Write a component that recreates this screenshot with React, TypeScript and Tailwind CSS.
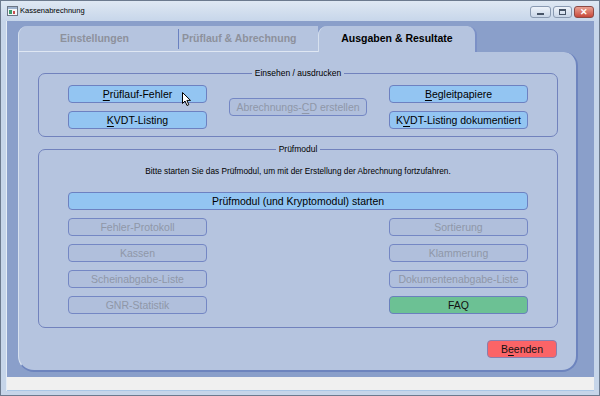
import React from 'react';

const font = { fontFamily: '"Liberation Sans", Arial, sans-serif' };

interface BtnProps {
  label: React.ReactNode;
  kind?: 'on' | 'off' | 'faq' | 'quit';
  className?: string;
  children?: React.ReactNode;
}

const Btn: React.FC<BtnProps> = ({ label, kind = 'on', className = '', children }) => {
  const look =
    kind === 'on'
      ? 'bg-[#93c5f2] border-[#6d81c1] text-black'
      : kind === 'off'
        ? 'bg-[#b0bfdc] border-[#7487c4] text-[#8f97a8]'
        : kind === 'faq'
          ? 'bg-[#6cc194] border-[#6a80bd] text-[#111]'
          : 'bg-[#fb6467] border-[#8a7fae] text-[#111]';
  return (
    <div
      className={`relative h-[18px] rounded-[4px] border flex items-center justify-center text-[10.5px] leading-none ${look} ${className}`}
    >
      <span>{label}</span>
      {children}
    </div>
  );
};

const U: React.FC<{ children: React.ReactNode }> = ({ children }) => (
  <span className="underline underline-offset-[2px]">{children}</span>
);

const Cursor = () => (
  <svg className="absolute left-[113px] top-[6px]" width="10" height="15" viewBox="0 0 10 15">
    <path d="M0.5 0.5 L0.5 11.5 L3 9 L5 13.5 L6.8 12.7 L4.9 8.4 L8.5 8.4 Z" fill="#fff" stroke="#000" strokeWidth="1" />
  </svg>
);

const Group: React.FC<{ title: string; className?: string; children: React.ReactNode }> = ({
  title,
  className = '',
  children,
}) => (
  <fieldset className={`border border-[#7182bd] rounded-[7px] ${className}`}>
    <legend className="mx-auto px-[3px] text-[8.5px] leading-[13px] text-black">{title}</legend>
    {children}
  </fieldset>
);

const WinBtn: React.FC<{ red?: boolean; children: React.ReactNode; w: string }> = ({ red, children, w }) => (
  <div
    className={`h-[12px] ${w} rounded-[3px] border flex items-center justify-center ${
      red
        ? 'border-[#8d4a45] bg-gradient-to-b from-[#e8a093] to-[#c7463a]'
        : 'border-[#8a9ab2] bg-gradient-to-b from-[#eef3fa] to-[#c9d6e8]'
    }`}
  >
    {children}
  </div>
);

export default function App() {
  return (
    <div
      style={font}
      className="w-[600px] h-[396px] flex flex-col bg-[#c6d5e9] border border-[#6c7a8e] overflow-hidden"
    >
      {/* title bar */}
      <div className="h-[20px] flex items-center pl-[6px] pr-[5px] bg-gradient-to-b from-[#dfe8f3] to-[#c7d6ea]">
        <svg width="11" height="10" viewBox="0 0 11 10" className="mr-[2px]">
          <rect x="0.5" y="0.5" width="10" height="9" fill="#f4f6f8" stroke="#6b7686" />
          <rect x="1" y="1" width="9" height="2" fill="#9fb3cf" />
          <rect x="2" y="4" width="3" height="4" fill="#3c9a6a" />
          <rect x="6" y="5" width="2" height="3" fill="#c85050" />
        </svg>
        <span className="text-[7.5px] text-black">Kassenabrechnung</span>
        <div className="ml-auto flex gap-[2px] pt-[2px]">
          <WinBtn w="w-[21px]">
            <div className="w-[7px] h-[2px] border border-[#475467] mt-[3px]" />
          </WinBtn>
          <WinBtn w="w-[19px]">
            <div className="w-[7px] h-[6px] border border-[#475467] border-t-2" />
          </WinBtn>
          <WinBtn red w="w-[20px]">
            <span className="text-white text-[9px] font-bold leading-none">✕</span>
          </WinBtn>
        </div>
      </div>

      {/* frame + client */}
      <div className="flex-1 flex pl-[5px] pr-[5px] pb-[4px]">
        <div className="flex-1 flex flex-col bg-[#8a9fca] border-l border-[#e4ecf6]">
          <div className="flex-1 flex flex-col pl-[11px] pr-[16px] pt-[5px] pb-[5px]">
            {/* tabs */}
            <div className="h-[26px] flex items-end">
              <div className="w-[160px] h-[26px] bg-[#b5c4df] rounded-tl-[9px] border-l border-[#d7e1ef] border-b border-b-[#dfe7f3] flex items-center justify-center pr-[8px] text-[10.5px] font-bold text-[#8d919c]">
                Einstellungen
              </div>
              <div className="w-[140px] h-[26px] bg-[#b5c4df] border-b border-[#dfe7f3] flex items-center">
                <div className="w-[1px] h-[20px] bg-[#6a81c0] mr-[3px]" />
                <span className="text-[10.5px] font-bold text-[#8d919c]">Prüflauf &amp; Abrechnung</span>
              </div>
              <div className="w-[159px] h-[26px] bg-[#b5c4df] rounded-t-[9px] border-r-2 border-[#7b90c6] border-l border-l-[#d7e1ef] flex items-center justify-center text-[10.5px] font-bold text-black">
                Ausgaben &amp; Resultate
              </div>
            </div>

            {/* panel */}
            <div className="flex-1 flex flex-col bg-[#b5c4df] rounded-tr-[14px] rounded-b-[16px] border-l border-l-[#d7e1ef] border-r-2 border-b-2 border-[#6d84be] pl-[19px] pr-[18px] pt-[15px]">
              <Group title="Einsehen / ausdrucken" className="pt-[5px] pb-[7px] px-[29px]">
                <div className="flex justify-between items-center">
                  <div className="w-[139px] flex flex-col gap-[8px]">
                    <Btn
                      label={
                        <>
                          <U>P</U>rüflauf-Fehler
                        </>
                      }
                    >
                      <Cursor />
                    </Btn>
                    <Btn
                      label={
                        <>
                          <U>K</U>VDT-Listing
                        </>
                      }
                    />
                  </div>
                  <Btn
                    kind="off"
                    className="w-[138px]"
                    label={
                      <>
                        Abrechnungs-<U>C</U>D erstellen
                      </>
                    }
                  />
                  <div className="w-[139px] flex flex-col gap-[8px]">
                    <Btn
                      label={
                        <>
                          <U>B</U>egleitpapiere
                        </>
                      }
                    />
                    <Btn
                      label={
                        <>
                          K<U>V</U>DT-Listing dokumentiert
                        </>
                      }
                    />
                  </div>
                </div>
              </Group>

              <Group title="Prüfmodul" className="mt-[6px] pt-[10px] pb-[13px] px-[29px]">
                <p className="text-[8.25px] leading-[12px] text-black text-center mb-[14px]">
                  Bitte starten Sie das Prüfmodul, um mit der Erstellung der Abrechnung fortzufahren.
                </p>
                <Btn label="Prüfmodul (und Kryptomodul) starten" />
                <div className="mt-[8px] grid grid-cols-[139px_139px] justify-between gap-y-[8px]">
                  <Btn kind="off" label="Fehler-Protokoll" />
                  <Btn kind="off" label="Sortierung" />
                  <Btn kind="off" label="Kassen" />
                  <Btn kind="off" label="Klammerung" />
                  <Btn kind="off" label="Scheinabgabe-Liste" />
                  <Btn kind="off" label="Dokumentenabgabe-Liste" />
                  <Btn kind="off" label="GNR-Statistik" />
                  <Btn kind="faq" label="FAQ" />
                </div>
              </Group>

              <div className="mt-[12px] flex justify-end pr-[1px]">
                <Btn
                  kind="quit"
                  className="w-[70px]"
                  label={
                    <>
                      B<U>e</U>enden
                    </>
                  }
                />
              </div>
            </div>
          </div>

          {/* status bar */}
          <div className="h-[14px] bg-[#f0f0f0] border-b border-[#a9c6e6]" />
        </div>
      </div>
    </div>
  );
}
